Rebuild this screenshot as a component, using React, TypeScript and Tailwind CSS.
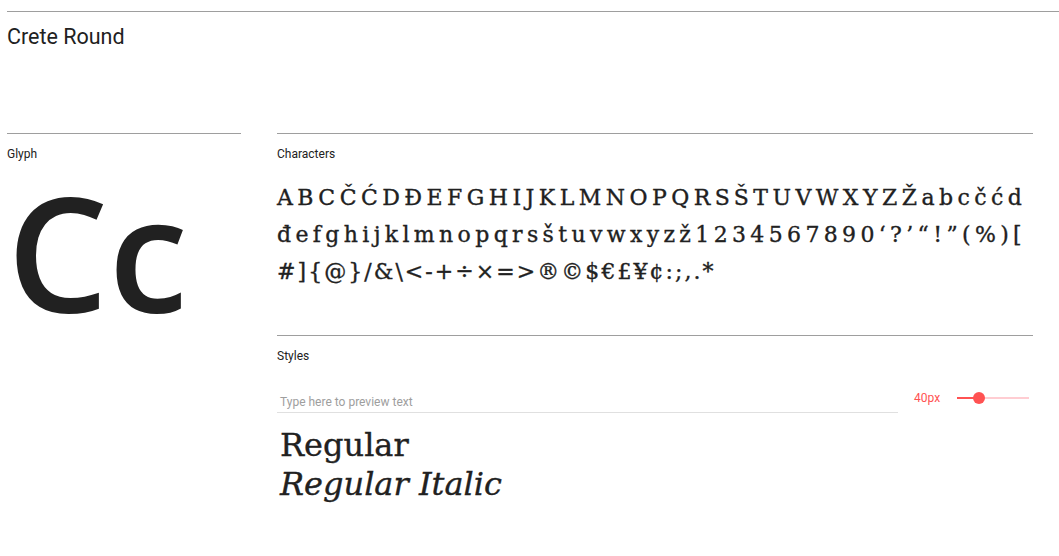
import React from "react";

const serif = "font-['DejaVu_Serif',serif] [-webkit-text-stroke:0.35px_#212121]";

export default function App() {
  return (
    <div className="min-h-screen bg-white pl-[7px] font-['Roboto',sans-serif] text-[#212121]">
      <div className="mt-[11px] border-t border-[#9e9e9e]">
        <h1 className="pt-[13px] text-[21.5px] leading-[24px] font-normal text-[#212121]">Crete Round</h1>
      </div>

      <div className="mt-[84px] flex gap-[36px]">
        <section className="w-[234px] border-t border-[#9e9e9e]">
          <div className="pt-[12px] text-[12px] leading-[16px]">Glyph</div>
          <div className="mt-[8px] font-['Open_Sans',sans-serif] text-[160px] leading-[160px] font-[580] text-[#212121]">Cc</div>
        </section>

        <section className="w-[756px]">
          <div className="border-t border-[#9e9e9e]">
            <div className="pt-[12px] text-[12px] leading-[16px]">Characters</div>
            <div className={`mt-[17px] ${serif} text-[22px] leading-[37px] text-[#212121]`}>
              <div className="whitespace-nowrap tracking-[4.45px]">ABCČĆDĐEFGHIJKLMNOPQRSŠTUVWXYZŽabcčćd</div>
              <div className="whitespace-nowrap tracking-[4.35px]">đefghijklmnopqrsštuvwxyzž1234567890‘?’“!”(%)[</div>
              <div className="whitespace-nowrap tracking-[2.05px]">#]{"{"}@{"}"}/&amp;\&lt;-+÷×=&gt;®©$€£¥¢:;,.*</div>
            </div>
          </div>

          <div className="mt-[45px] border-t border-[#9e9e9e]">
            <div className="pt-[12px] text-[12px] leading-[16px]">Styles</div>
            <div className="mt-[30px] flex items-center">
              <div className="w-[621px] border-b border-[#e0e0e0] pb-[2px] pl-[3px] text-[12px] leading-[16px] text-[#9e9e9e]">
                Type here to preview text
              </div>
              <div className="ml-[16px] -mt-[11px] text-[12px] leading-[16px] text-[#ff5252]">40px</div>
              <div className="relative ml-[17px] -mt-[11px] h-[12px] w-[72px]">
                <div className="absolute left-0 right-0 top-[5px] h-[2px] bg-[#ffcdd2]" />
                <div className="absolute left-0 top-[5px] h-[2px] w-[22px] bg-[#ff5252]" />
                <div className="absolute left-[16px] top-0 h-[12px] w-[12px] rounded-full bg-[#ff5252]" />
              </div>
            </div>
            <div className={`mt-[13px] pl-[3px] ${serif} text-[32px] leading-[39px] text-[#212121]`}>
              <div>Regular</div>
              <div className="italic">Regular Italic</div>
            </div>
          </div>
        </section>
      </div>
    </div>
  );
}
